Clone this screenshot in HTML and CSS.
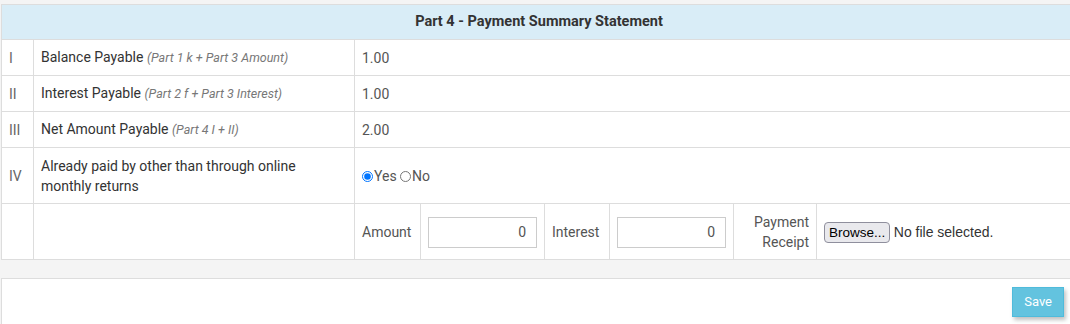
FILE: index.html
```html
<!DOCTYPE html>
<html lang="en">
  <head>
    <meta charset="UTF-8" />
    <meta name="viewport" content="width=device-width, initial-scale=1.0" />
    <title>Payment Summary Statement</title>
    <link rel="stylesheet" href="styles.css">
  </head>
  <body>
    <div class="wrapper">
      <table class="summary">
        <colgroup>
          <col class="c-num" />
          <col class="c-label" />
          <col class="c-amount" />
          <col class="c-input" />
          <col class="c-interest" />
          <col class="c-input" />
          <col class="c-receipt" />
          <col />
        </colgroup>
        <thead>
          <tr>
            <th colspan="8">Part 4 - Payment Summary Statement</th>
          </tr>
        </thead>
        <tbody>
          <tr>
            <td class="num">I</td>
            <td>Balance Payable <i class="hint">(Part 1 k + Part 3 Amount)</i></td>
            <td colspan="6" class="value">1.00</td>
          </tr>
          <tr>
            <td class="num">II</td>
            <td>Interest Payable <i class="hint">(Part 2 f + Part 3 Interest)</i></td>
            <td colspan="6" class="value">1.00</td>
          </tr>
          <tr>
            <td class="num">III</td>
            <td>Net Amount Payable <i class="hint">(Part 4 I + II)</i></td>
            <td colspan="6" class="value">2.00</td>
          </tr>
          <tr class="tall">
            <td class="num">IV</td>
            <td>Already paid by other than through online monthly returns</td>
            <td colspan="6" class="value">
              <label class="radio"><input type="radio" name="paid" checked />Yes</label>
              <label class="radio"><input type="radio" name="paid" />No</label>
            </td>
          </tr>
          <tr class="tall">
            <td></td>
            <td></td>
            <td class="value">Amount</td>
            <td><input type="text" class="field" value="0" /></td>
            <td class="value">Interest</td>
            <td><input type="text" class="field" value="0" /></td>
            <td class="value right">Payment Receipt</td>
            <td>
              <span class="browse">Browse...</span>
              <span class="nofile">No file selected.</span>
            </td>
          </tr>
        </tbody>
      </table>

      <div class="panel">
        <button class="btn-save">Save</button>
      </div>
    </div>
  </body>
</html>
```

FILE: styles.css
```css
body {
  margin: 0;
  background-color: #f4f4f4;
  font-family: Roboto, "Liberation Sans", sans-serif;
  font-size: 14px;
  line-height: 20px;
  color: #333;
}
.wrapper {
  padding: 4px 0 0 1px;
  width: 1076px;
}
.summary {
  width: 1076px;
  table-layout: fixed;
  border-collapse: collapse;
  background-color: #fff;
  margin-bottom: 18px;
}
.c-num {
  width: 32px;
}
.c-label {
  width: 321px;
}
.c-amount {
  width: 66px;
}
.c-input {
  width: 124px;
}
.c-interest {
  width: 65px;
}
.c-receipt {
  width: 83px;
}
.summary th,
.summary td {
  border: 1px solid #ddd;
  padding: 7px 7px;
  vertical-align: middle;
  text-align: left;
}
.summary tr.tall td {
  padding-top: 8px;
}
.summary th {
  background-color: #d9edf7;
  text-align: center;
  font-size: 14.5px;
  font-weight: bold;
  color: #333;
}
.summary td.num {
  color: #666;
}
.summary td.value {
  color: #555;
}
.summary td.right {
  text-align: right;
}
.hint {
  font-size: 12.5px;
  color: #777;
}
.radio {
  color: #555;
}
.radio input {
  margin: 0 1px 0 0;
  width: 11px;
  height: 11px;
  vertical-align: -1px;
}
.field {
  display: block;
  box-sizing: border-box;
  width: 109px;
  height: 31px;
  padding: 4px 10px;
  border: 1px solid #ccc;
  font-family: Roboto, "Liberation Sans", sans-serif;
  font-size: 14px;
  color: #555;
  text-align: right;
}
.browse {
  display: inline-block;
  padding: 1px 4px;
  border: 1px solid #8f8f9d;
  border-radius: 4px;
  background-color: #e9e9ed;
  color: #000;
  font-family: "Liberation Sans", sans-serif;
  font-size: 13.5px;
  line-height: 17px;
}
.nofile {
  font-family: "Liberation Sans", sans-serif;
  font-size: 14px;
  color: #333;
}
.panel {
  background-color: #fff;
  border: 1px solid #ddd;
  border-bottom: none;
  height: 37px;
  padding: 8px 12px 0;
  text-align: right;
}
.btn-save {
  background-color: #5bc0de;
  border: 1px solid #46b8da;
  color: #fff;
  font-family: Roboto, "Liberation Sans", sans-serif;
  font-size: 13px;
  line-height: 18px;
  padding: 5px 11px;
  opacity: 0.95;
  box-shadow: 2px 3px 4px rgba(0, 0, 0, 0.25);
}
```
